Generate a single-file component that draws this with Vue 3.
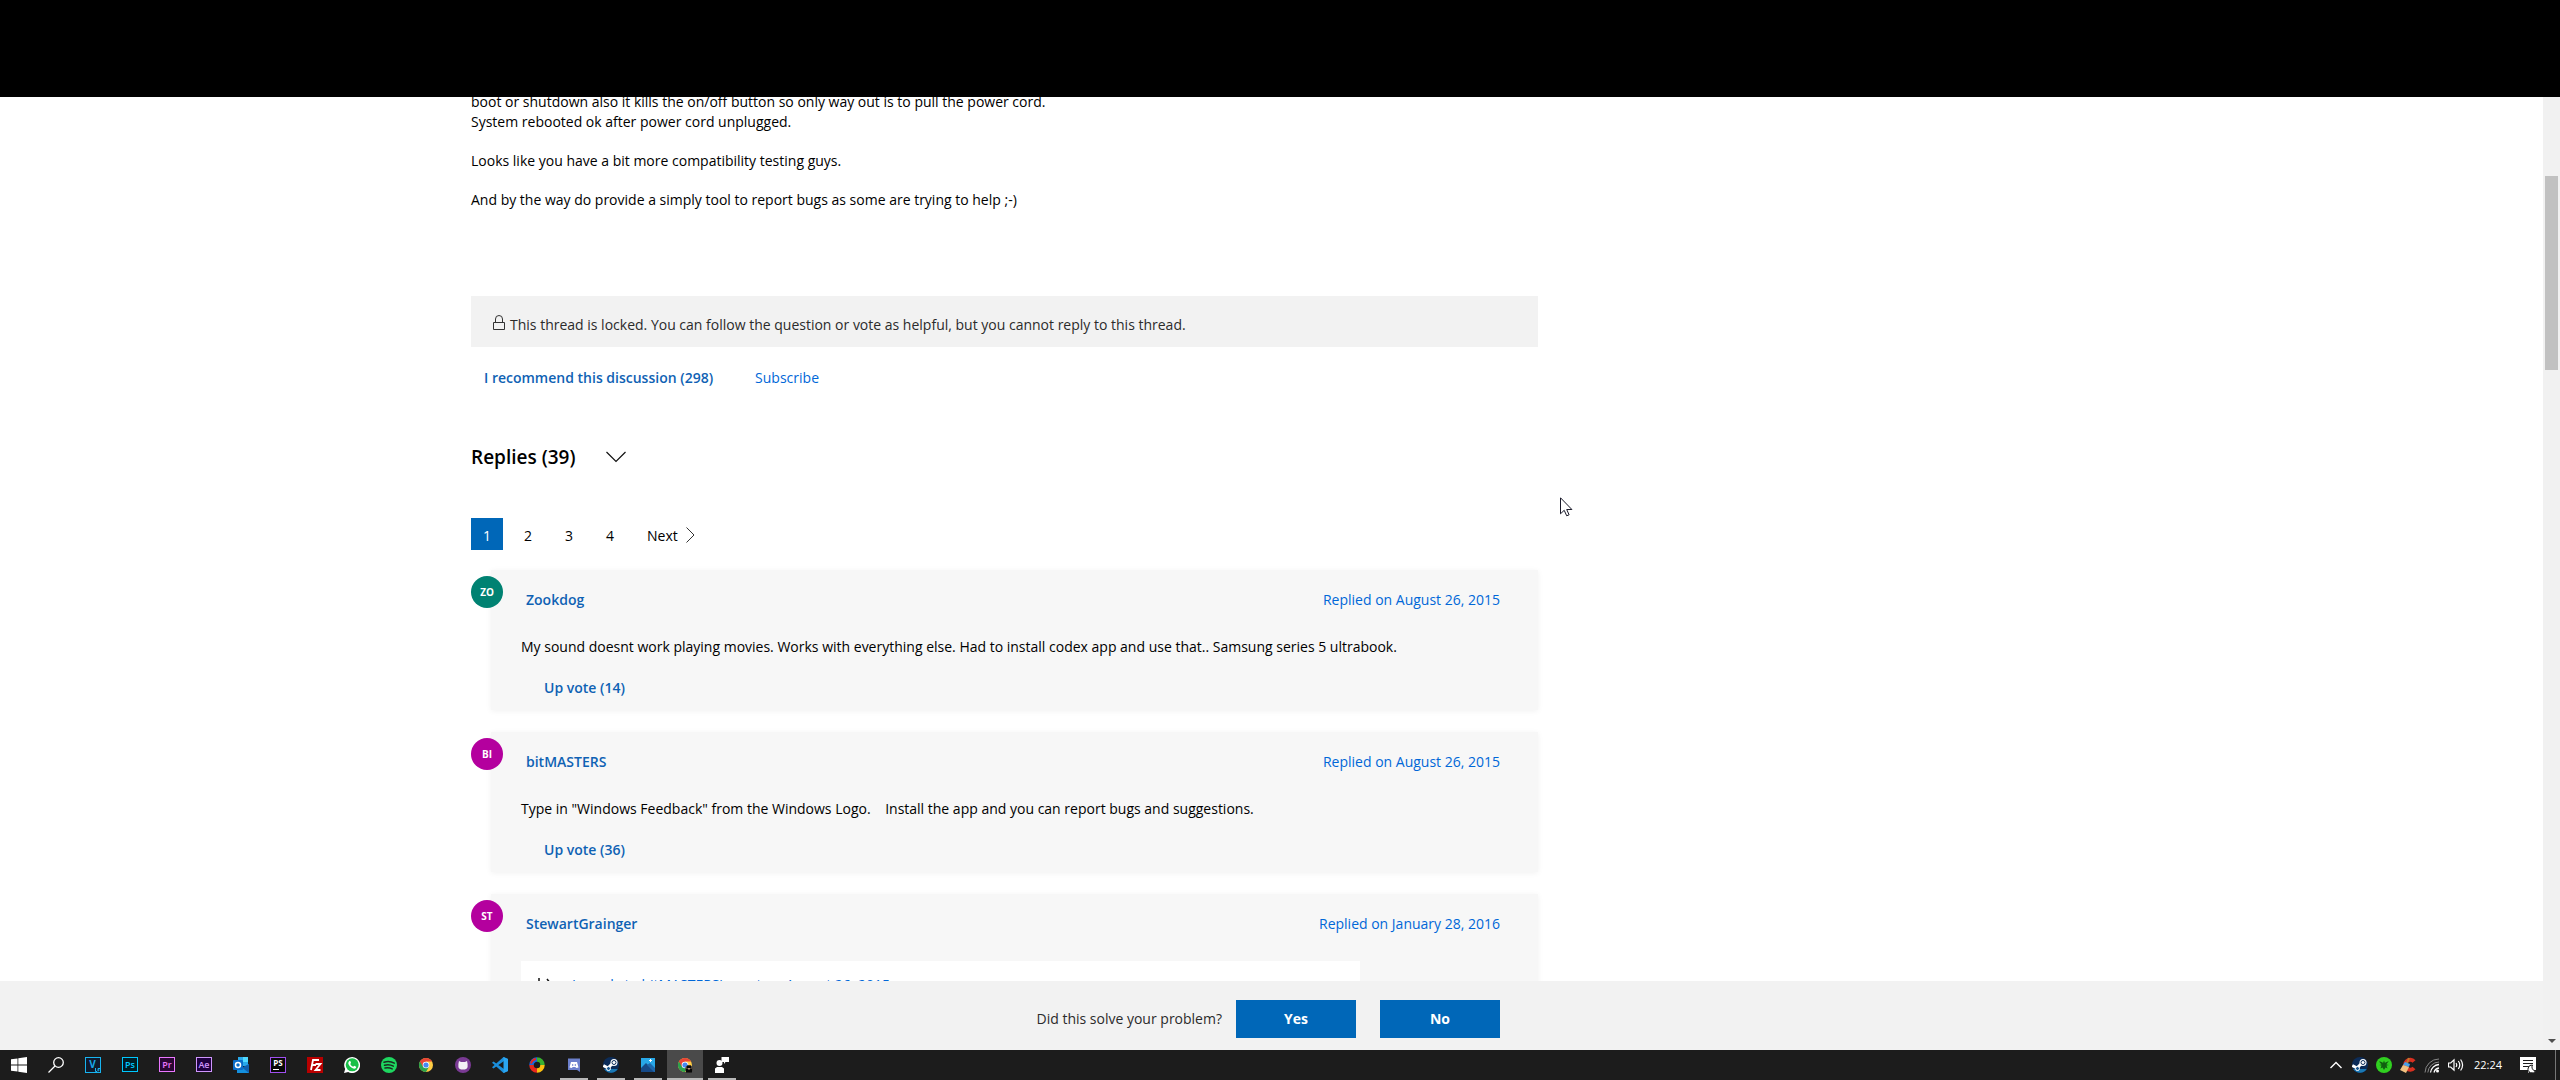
<script setup>
import { ref } from 'vue';

const pages = [1, 2, 3, 4];
const currentPage = ref(1);

const replies = [
    {
        id: 1,
        initials: 'ZO',
        color: 'teal',
        author: 'Zookdog',
        date: 'Replied on August 26, 2015',
        text: 'My sound doesnt work playing movies. Works with everything else. Had to install codex app and use that.. Samsung series 5 ultrabook.',
        votes: 14,
    },
    {
        id: 2,
        initials: 'BI',
        color: 'magenta',
        author: 'bitMASTERS',
        date: 'Replied on August 26, 2015',
        text: 'Type in "Windows Feedback" from the Windows Logo. \u00a0\u00a0 Install the app and you can report bugs and suggestions.',
        votes: 36,
    },
    {
        id: 3,
        initials: 'ST',
        color: 'magenta',
        author: 'StewartGrainger',
        date: 'Replied on January 28, 2016',
        quote: "In reply to bitMASTERS's post on August 26, 2015",
    },
];

// Apps pinned to the taskbar, left to right
const apps = [
    { name: 'Start', icon: 'start' },
    { name: 'Search', icon: 'search' },
    { name: 'Vegas', icon: 'vegas' },
    { name: 'Photoshop', icon: 'adobe', label: 'Ps', fill: '#001d26', line: '#00c8ff' },
    { name: 'Premiere', icon: 'adobe', label: 'Pr', fill: '#2a0634', line: '#ea77ff' },
    { name: 'After Effects', icon: 'adobe', label: 'Ae', fill: '#1f0040', line: '#cf96fd' },
    { name: 'Outlook', icon: 'outlook' },
    { name: 'PhpStorm', icon: 'phpstorm' },
    { name: 'FileZilla', icon: 'filezilla' },
    { name: 'WhatsApp', icon: 'whatsapp' },
    { name: 'Spotify', icon: 'spotify' },
    { name: 'Chrome', icon: 'chrome' },
    { name: 'GitHub Desktop', icon: 'github' },
    { name: 'VS Code', icon: 'vscode' },
    { name: 'Color picker', icon: 'swirl' },
    { name: 'Discord', icon: 'discord', running: true },
    { name: 'Steam', icon: 'steam', running: true },
    { name: 'Photos', icon: 'photos', running: true },
    { name: 'Chrome profile', icon: 'chrome', badge: true, running: true, active: true },
    { name: 'Feedback', icon: 'feedback', running: true },
];
</script>

<template>
    <div class="screen">
        <div class="blackout"></div>

        <div class="browser">
            <div class="page">
                <main class="content">
                    <div class="column">
                        <article class="question">
                            <p>
                                boot or shutdown also it kills the on/off button so only way out is to pull the power cord.<br />
                                System rebooted ok after power cord unplugged.
                            </p>
                            <p>Looks like you have a bit more compatibility testing guys.</p>
                            <p>And by the way do provide a simply tool to report bugs as some are trying to help ;-)</p>
                        </article>

                        <div class="locked">
                            <svg class="lock" viewBox="0 0 14 16" fill="none" stroke="#333">
                                <path d="M1.500 7.500h11v7h-11zM3.500 7.500V4a3.500 3.500 0 0 1 7 0v3.500" />
                            </svg>
                            <span>This thread is locked. You can follow the question or vote as helpful, but you cannot reply to this thread.</span>
                        </div>

                        <div class="thread-actions">
                            <button class="link strong">I recommend this discussion (298)</button>
                            <button class="link">Subscribe</button>
                        </div>

                        <div class="replies-head">
                            <h2>Replies (39)</h2>
                            <button class="icon-btn" aria-label="Sort replies">
                                <svg class="chevron-down" viewBox="0 0 20 12" fill="none" stroke="#111" stroke-width="1.2">
                                    <path d="M.5 1l9.500 9.500L19.500 1" />
                                </svg>
                            </button>
                        </div>

                        <nav class="pager">
                            <button
                                v-for="n in pages"
                                :key="n"
                                :class="['page-btn', { current: n === currentPage }]"
                                @click="currentPage = n"
                            >{{ n }}</button>
                            <button class="next">
                                Next
                                <svg class="chevron-right" viewBox="0 0 9 16" fill="none" stroke="#333">
                                    <path d="M.5.500L8 8 .500 15.500" />
                                </svg>
                            </button>
                        </nav>

                        <section v-for="reply in replies" :key="reply.id" class="reply">
                            <span :class="['avatar', reply.color]">{{ reply.initials }}</span>
                            <div class="card">
                                <header class="card-head">
                                    <a href="#" class="author">{{ reply.author }}</a>
                                    <a href="#" class="date">{{ reply.date }}</a>
                                </header>
                                <div v-if="reply.quote" class="quote">
                                    <svg class="reply-arrow" viewBox="0 0 16 14" fill="none" stroke="#111" stroke-width="1.500">
                                        <path d="M1 0v8h13M9 1l5.500 7L9 14" />
                                    </svg>
                                    <a href="#">{{ reply.quote }}</a>
                                </div>
                                <p v-if="reply.text" class="card-text">{{ reply.text }}</p>
                                <button v-if="reply.votes" class="link strong vote">Up vote ({{ reply.votes }})</button>
                            </div>
                        </section>
                    </div>
                </main>

                <footer class="survey">
                    <div class="survey-inner">
                        <span>Did this solve your problem?</span>
                        <button class="primary">Yes</button>
                        <button class="primary">No</button>
                    </div>
                </footer>
            </div>

            <div class="scrollbar">
                <div class="thumb"></div>
                <svg class="scroll-arrow" viewBox="0 0 8 4" fill="#505050"><path d="M0 0h8L4 4z" /></svg>
            </div>
        </div>

        <div class="taskbar">
            <button
                v-for="app in apps"
                :key="app.name"
                :class="['task', { running: app.running, active: app.active }]"
                :aria-label="app.name"
            >
                <svg class="task-icon" viewBox="0 0 16 16">
                    <g v-if="app.icon === 'start'" fill="#fff">
                        <path d="M0 2.300l6.500-.9v6.200H0zM7.300 1.300L16 0v7.600H7.300zM0 8.400h6.500v6.200L0 13.700zM7.300 8.400H16V16l-8.700-1.300z" />
                    </g>
                    <g v-else-if="app.icon === 'search'" fill="none" stroke="#fff" stroke-width="1.300">
                        <circle cx="10.500" cy="5.500" r="4.800" />
                        <path d="M7 9L.5 15.500" />
                    </g>
                    <g v-else-if="app.icon === 'vegas'">
                        <rect x=".5" y=".5" width="15" height="15" fill="#101a2c" stroke="#18b4f0" />
                        <text x="7.500" y="11" text-anchor="middle" font-size="10" font-weight="700" fill="#18a8e8">V</text>
                        <path d="M10.500 11v3.500h1.500M13 14.500V11.500h2M13 13h1.500" stroke="#18b4f0" fill="none" />
                    </g>
                    <g v-else-if="app.icon === 'adobe'">
                        <rect x=".5" y=".5" width="15" height="14" :fill="app.fill" :stroke="app.line" />
                        <text x="8" y="11" text-anchor="middle" font-size="9" font-weight="600" :fill="app.line">{{ app.label }}</text>
                    </g>
                    <g v-else-if="app.icon === 'outlook'">
                        <path d="M5 0h10v9H5z" fill="#28a8ea" />
                        <path d="M10 0h5v5h-5z" fill="#50d9ff" />
                        <path d="M4 7l6 4 6-4v9H4z" fill="#1490df" />
                        <path d="M16 7v9L9 10.500z" fill="#0f5fae" />
                        <rect y="3" width="10" height="10" rx="1" fill="#0a6cc8" />
                        <circle cx="5" cy="8" r="2.500" fill="none" stroke="#fff" stroke-width="1.500" />
                    </g>
                    <g v-else-if="app.icon === 'phpstorm'">
                        <rect x=".5" y=".5" width="15" height="15" fill="#080808" stroke="#a050f0" />
                        <text x="8" y="9" text-anchor="middle" font-size="8" font-weight="700" fill="#fff">PS</text>
                        <path d="M3 12.500h6" stroke="#fff" />
                    </g>
                    <g v-else-if="app.icon === 'filezilla'">
                        <rect width="16" height="16" fill="#b80000" />
                        <path d="M4 13L6 3h6M5 8h4M8.500 7h5l-5 6h5" stroke="#fff" stroke-width="1.800" fill="none" />
                    </g>
                    <g v-else-if="app.icon === 'whatsapp'">
                        <path d="M0 16l1.200-4A8 8 0 1 1 4.200 15z" fill="#fff" />
                        <circle cx="8.200" cy="7.800" r="6.500" fill="#18c048" />
                        <path d="M5 4.500c1-1 1.600-.2 2 1.200L6.300 7c.7 1.400 1.500 2.200 2.900 2.700l1-1 2 1c.2 1.500-1.500 2.300-3 1.800C6.600 10.500 4.300 8 4.200 6z" fill="#fff" />
                    </g>
                    <g v-else-if="app.icon === 'spotify'">
                        <circle cx="8" cy="8" r="8" fill="#1ed760" />
                        <path d="M3 5.200c3.500-1 7.500-.6 10.300 1M3.500 8.200c3-.8 6.300-.5 8.800 1M4 11c2.600-.6 5-.3 7.200.9" stroke="#1c2c20" stroke-width="1.500" stroke-linecap="round" fill="none" />
                    </g>
                    <g v-else-if="app.icon === 'chrome'">
                        <circle cx="8" cy="8" r="7" fill="#fc4" />
                        <path d="M8 8L1.900 4.500A7 7 0 0 0 8 15l3-5.200z" fill="#2ba24c" />
                        <path d="M1.900 4.500A7 7 0 0 1 14.100 4.500H8L5 9.700z" fill="#e84335" />
                        <circle cx="8" cy="8" r="3.300" fill="#fff" />
                        <circle cx="8" cy="8" r="2.600" fill="#4688f1" />
                        <g v-if="app.badge">
                            <circle cx="12" cy="12" r="3.800" fill="#4a4038" />
                            <path d="M10 8.500h4V11h-4zM9 12h6v3.500H9z" fill="#080808" />
                            <path d="M11 11h2v1.500h-2z" fill="#c09070" />
                        </g>
                    </g>
                    <g v-else-if="app.icon === 'github'">
                        <circle cx="8" cy="8" r="8" fill="#7a3a94" />
                        <path d="M4 4l2 1h4l2-1 .6 3v3c-.5 2-2 2.500-4.600 2.500S3.800 12 3.400 10V7z" fill="#f4f0f6" />
                    </g>
                    <g v-else-if="app.icon === 'vscode'">
                        <path d="M11.500 0L16 2v12l-4.500 2L1.500 7 0 5.800l1.500-1.300L12 12V4L1.500 11.500 0 10.200z" fill="#1b8fdc" />
                        <path d="M11.500 0L16 2v12l-4.500 2z" fill="#2aa6f2" />
                    </g>
                    <g v-else-if="app.icon === 'swirl'" fill="none" stroke-width="4.500">
                        <path d="M8 2.500A5.500 5.500 0 0 1 13.500 8" stroke="#38b030" />
                        <path d="M13.500 8A5.500 5.500 0 0 1 8 13.500" stroke="#fcc010" />
                        <path d="M8 13.500A5.500 5.500 0 0 1 2.500 8" stroke="#e8281c" />
                        <path d="M2.500 8A5.500 5.500 0 0 1 8 2.500" stroke="#1868e0" />
                        <path d="M2 6.500A6 6 0 0 1 7 2" stroke="#e8281c" stroke-width="2" />
                    </g>
                    <g v-else-if="app.icon === 'discord'">
                        <path d="M2 1.500h12V15l-3-2H2z" fill="#6c80cc" />
                        <path d="M5 5h6l1.500 5.500L10 11 9.500 10h-3L6 11l-2.500-.5z" fill="#fff" />
                        <path d="M6 7.200h1.300v1.600H6zM8.700 7.200H10v1.600H8.700z" fill="#6c80cc" />
                    </g>
                    <g v-else-if="app.icon === 'steam'">
                        <circle cx="8" cy="8" r="8" fill="#0c2c58" />
                        <path d="M1.200 12A8 8 0 0 0 14.800 12z" fill="#1a78b4" />
                        <path d="M.3 8.500L5 11l5-5" stroke="#fff" stroke-width="3" fill="none" />
                        <circle cx="5.500" cy="11.500" r="2" fill="#1a5890" stroke="#fff" />
                        <circle cx="11" cy="5.500" r="3.500" fill="#fff" />
                        <circle cx="11" cy="5.500" r="2" fill="#fff" stroke="#0c2c58" />
                    </g>
                    <g v-else-if="app.icon === 'photos'">
                        <path d="M1 1h14v14H1z" fill="#28a8e8" />
                        <path d="M1 11l5-5 9 9H1z" fill="#164a88" />
                        <path d="M7 8l3-2 5 5v4h-1z" fill="#1e68ac" />
                        <path d="M10.500 2v3M9 3.500h3" stroke="#fff" />
                    </g>
                    <g v-else fill="#fff">
                        <circle cx="5.500" cy="6" r="3" />
                        <path d="M1 16v-4.500L3 10h5l2 1.500V16zM7.500 0H15v5h-3.500L10 7V5H7.500z" />
                    </g>
                </svg>
            </button>

            <div class="tray">
                <svg class="tray-icon" viewBox="0 0 16 16" fill="none" stroke="#fff" stroke-width="1.400"><path d="M2.500 11L8 5.500l5.500 5.500" /></svg>
                <svg class="tray-icon" viewBox="0 0 16 16">
                    <circle cx="8" cy="8" r="8" fill="#0c2c58" />
                    <path d="M1.200 12A8 8 0 0 0 14.800 12z" fill="#1a78b4" />
                    <path d="M.3 8.500L5 11l5-5" stroke="#fff" stroke-width="3" fill="none" />
                    <circle cx="5.500" cy="11.500" r="2" fill="#1a5890" stroke="#fff" />
                    <circle cx="11" cy="5.500" r="3.500" fill="#fff" />
                    <circle cx="11" cy="5.500" r="2" fill="#fff" stroke="#0c2c58" />
                </svg>
                <svg class="tray-icon" viewBox="0 0 16 16">
                    <circle cx="8" cy="8" r="8" fill="#30d020" />
                    <path d="M3 4.500c2 0 3 .5 4 1.500l1-2.500L9 6c1-1 2-1.500 4-1.500-1 .5-2 1.500-2.500 3L13 8l-2.500.5 1 3-2-1L8 13l-1.500-2.500-2 1 1-3L3 8l2.500-.5z" fill="#106010" />
                </svg>
                <svg class="tray-icon" viewBox="0 0 16 16" fill="none">
                    <path d="M14 4.500A5 5 0 1 0 14 11" stroke="#d83020" stroke-width="4" />
                    <path d="M9 1L7 6" stroke="#c0782c" stroke-width="2" />
                    <path d="M5 5l5 2-1 3-6-2z" fill="#48a0e8" />
                    <path d="M3 8l6 2-3 6-6-3z" fill="#f0c080" />
                </svg>
                <svg class="tray-icon" viewBox="0 0 16 16" fill="none" stroke="#fff" stroke-width="1.300">
                    <path d="M6.500 15.500A9.500 9.500 0 0 1 15 7.500M10 15.500A6 6 0 0 1 15 11" />
                    <path d="M1 15.500A14 14 0 0 1 15 2M3.800 15.500A11.500 11.500 0 0 1 15 5" stroke="#888" stroke-width="1" />
                    <circle cx="13.500" cy="14" r="1.500" fill="#fff" stroke="none" />
                </svg>
                <svg class="tray-icon" viewBox="0 0 16 16" fill="none" stroke="#fff" stroke-width="1.200">
                    <path d="M.5 6h2.200L6 2.800v10.400L2.700 10H.5zM8 6q1.500 2 0 4M10.300 4q3 4 0 8M12.600 2.500q4 5.500 0 11" />
                </svg>
                <time class="clock">22:24</time>
                <svg class="tray-icon notice" viewBox="0 0 16 16">
                    <path d="M0 0h16v13h-5l-3 3v-3H0z" fill="#fff" />
                    <path d="M3 3.500h10M3 6.500h10M3 9.500h6" stroke="#1c1c1c" />
                    <path d="M12.500 8a4 4 0 1 0 3 6 4 4 0 0 1-3-6z" fill="#fff" stroke="#1c1c1c" />
                </svg>
            </div>
        </div>

        <svg class="cursor" viewBox="0 0 13 20" fill="#fff" stroke="#181828">
            <path d="M.5.800v16l3.700-3.500 2.500 5.500 2.400-1-2.400-5.300h5.200z" />
        </svg>
    </div>
</template>

<style>
body {
    margin: 0;
}
</style>

<style scoped>
.screen {
    height: 100vh;
    display: flex;
    flex-direction: column;
    position: relative;
    overflow: hidden;
    background: #fff;
    color: #000;
    font: 14px/20px "Open Sans", "Noto Sans", sans-serif;
}

button {
    font: inherit;
    color: inherit;
    background: none;
    border: 0;
    padding: 0;
    cursor: pointer;
}

a {
    color: #0067d8;
    text-decoration: none;
}

p {
    margin: 0;
}

.blackout {
    flex: 0 0 97px;
    background: #000;
}

.browser {
    flex: 1;
    min-height: 0;
    display: flex;
}

.page {
    flex: 1;
    min-width: 0;
    display: flex;
    flex-direction: column;
}

.content {
    flex: 1;
    min-height: 0;
    overflow: hidden;
}

.column,
.survey-inner {
    box-sizing: border-box;
    width: 100%;
    max-width: 1601px;
    margin: 0 auto;
    padding-right: 534px;
}

/* Page is scrolled part way through the first line */
.question {
    margin-top: -5px;
    display: flex;
    flex-direction: column;
    gap: 19px;
    padding-bottom: 86px;
}

.locked {
    display: flex;
    align-items: center;
    gap: 4px;
    padding: 19px 21px 12px;
    background: #f2f2f2;
    color: #2b2b2b;
}

.lock {
    width: 14px;
    height: 16px;
    margin-bottom: 4px;
}

.thread-actions {
    display: flex;
    gap: 42px;
    padding: 21px 13px 0;
}

.link {
    color: #0067d8;
}

.strong {
    color: #0f62b4;
    font-weight: 600;
}

.replies-head {
    display: flex;
    align-items: center;
    gap: 31px;
    margin: 55px 0 47px;
}

h2 {
    margin: 0;
    font-size: 19px;
    line-height: 28px;
    font-weight: 600;
}

.icon-btn {
    display: flex;
}

.chevron-down {
    width: 20px;
    height: 12px;
}

.pager {
    display: flex;
    gap: 9px;
    margin-bottom: 20px;
}

.page-btn {
    width: 32px;
    height: 32px;
    padding-top: 3px;
}

.page-btn.current {
    background: #0067b8;
    color: #fff;
}

.next {
    display: flex;
    align-items: center;
    gap: 8px;
    margin-left: 12px;
    padding-top: 3px;
}

.chevron-right {
    width: 9px;
    height: 16px;
    margin-bottom: 2px;
}

.reply {
    display: flex;
    align-items: flex-start;
    margin-bottom: 22px;
}

.avatar {
    flex: none;
    width: 32px;
    margin: 6px -12px 0 0;
    border-radius: 50%;
    color: #fff;
    font-size: 10px;
    line-height: 32px;
    font-weight: 700;
    text-align: center;
    z-index: 1;
}

.teal {
    background: #008272;
}

.magenta {
    background: #b4009e;
}

.card {
    flex: 1;
    display: flex;
    flex-direction: column;
    align-items: flex-start;
    padding: 20px 38px 12px 30px;
    background: #f7f7f7;
    box-shadow: 0 1px 6px rgba(0, 0, 0, 0.06);
}

.card-head {
    align-self: stretch;
    display: flex;
    justify-content: space-between;
    padding-left: 5px;
    margin-bottom: 27px;
}

.author {
    color: #0f62b4;
    font-weight: 600;
}

.vote {
    margin: 21px 0 0 23px;
}

.quote {
    align-self: stretch;
    display: flex;
    align-items: center;
    gap: 18px;
    margin-right: 140px;
    padding: 14px 17px 60px;
    background: #fff;
}

.reply-arrow {
    width: 16px;
    height: 14px;
}

.survey {
    background: #f2f2f2;
    color: #2b2b2b;
}

.survey-inner {
    display: flex;
    justify-content: flex-end;
    align-items: center;
    padding-top: 19px;
    padding-bottom: 12px;
    padding-right: 572px;
}

.primary {
    width: 120px;
    height: 38px;
    margin-left: 24px;
    background: #0067b8;
    color: #fff;
    font-weight: 700;
}

span + .primary {
    margin-left: 14px;
}

.scrollbar {
    width: 17px;
    display: flex;
    flex-direction: column;
    align-items: center;
    background: #f1f1f1;
}

.thumb {
    width: 13px;
    height: 194px;
    margin: 79px 0 auto;
    background: #c1c1c1;
}

.scroll-arrow {
    width: 8px;
    height: 4px;
    margin-bottom: 7px;
}

.taskbar {
    flex: 0 0 30px;
    display: flex;
    gap: 1px;
    padding-left: 1px;
    background: #1c1c1c;
    color: #fff;
}

.task {
    width: 36px;
    display: flex;
    align-items: center;
    justify-content: center;
    background: linear-gradient(#b8b8b8, #b8b8b8) no-repeat center bottom / 0 2px;
}

.running {
    background-size: 28px 2px;
}

.active {
    background-color: #4a4a4a;
    background-size: 100% 2px;
}

.task-icon,
.tray-icon {
    display: block;
    width: 16px;
    height: 16px;
}

.tray {
    display: flex;
    align-items: center;
    gap: 8px;
    margin: 0 4px 0 auto;
    padding-right: 19px;
    border-right: 1px solid #777;
}

.clock {
    margin-left: 2px;
    font-size: 11px;
}

.notice {
    margin-left: 10px;
}

/* Mouse pointer floating over the page */
.cursor {
    position: absolute;
    left: 1560px;
    top: 497px;
    width: 13px;
    height: 20px;
}
</style>
